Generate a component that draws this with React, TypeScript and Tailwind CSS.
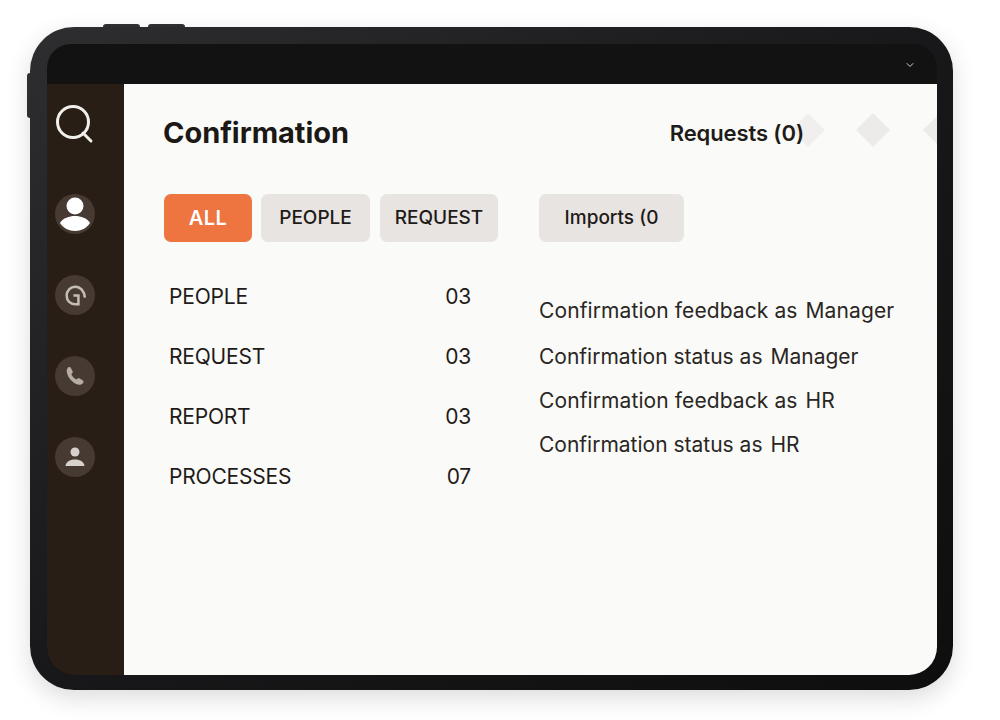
import { ChevronDown } from "lucide-react";

const rows = [
  { label: "PEOPLE", count: "03" },
  { label: "REQUEST", count: "03" },
  { label: "REPORT", count: "03" },
  { label: "PROCESSES", count: "07" },
];

const feedback = [
  { text: "Confirmation feedback as", role: "Manager", className: "h-[46px] tracking-[0.1px]" },
  { text: "Confirmation status as", role: "Manager", className: "h-[44px]" },
  { text: "Confirmation feedback as", role: "HR", className: "h-[44px] tracking-[0.1px]" },
  { text: "Confirmation status as", role: "HR", className: "h-[44px]" },
];

function NavCircle({ children, className = "" }: { children: React.ReactNode; className?: string }) {
  return (
    <div className={`flex h-[40px] w-[40px] items-center justify-center rounded-full bg-[#463a33] ${className}`}>
      {children}
    </div>
  );
}

function Sidebar() {
  return (
    <aside className="flex w-[77px] shrink-0 flex-col items-start bg-[#281e16] pl-[8px] pt-[20px]">
      <svg width="40" height="40" viewBox="0 0 40 40" fill="none" stroke="#f1efec" strokeWidth="3" strokeLinecap="round">
        <circle cx="18" cy="18" r="15.5" />
        <path d="M28 29l8 8" />
      </svg>
      <NavCircle className="mt-[50px]">
        <svg width="32" height="36" viewBox="0 0 32 36" fill="#ffffff">
          <circle cx="16" cy="10" r="8.5" />
          <path d="M1 27c3-5 9-7 15-7s12 2 15 7c-3 5-9 8-15 8s-12-3-15-8z" />
        </svg>
      </NavCircle>
      <NavCircle className="mt-[41px]">
        <svg width="25" height="25" viewBox="0 0 24 24" fill="none" stroke="#c4bdb7" strokeWidth="2.4">
          <path d="M21 14C20.500 7.500 16.500 3.500 12 3.500 7 3.500 3.500 7.500 3.500 12c0 5 3.500 8.500 8.500 8.500h2.800V12H10" />
        </svg>
      </NavCircle>
      <NavCircle className="mt-[41px]">
        <svg width="24" height="24" viewBox="0 0 24 24" fill="#b5aca5">
          <path d="M5 3.500c1-.8 2.300-.5 2.900.6l1.600 3c.4.800.3 1.600-.3 2.200l-.9 1c.9 2.100 2.800 4.100 5 5.200l1.200-.9c.6-.5 1.500-.5 2.200-.1l2.900 1.800c1 .6 1.200 1.800.5 2.700-1 1.300-2.500 2-4 1.800C10 19.800 4.500 13.500 3.800 8c-.2-1.800.2-3.400 1.200-4.500z" />
        </svg>
      </NavCircle>
      <NavCircle className="mt-[41px]">
        <svg width="22" height="22" viewBox="0 0 22 22" fill="#d8d2cc">
          <circle cx="11" cy="6" r="4.500" />
          <path d="M1.500 20c.5-4 4-6.500 9.500-6.500s9 2.500 9.500 6.500z" />
        </svg>
      </NavCircle>
    </aside>
  );
}

function Tab({ label, active = false, className = "" }: { label: string; active?: boolean; className?: string }) {
  return (
    <button
      className={`flex h-[48px] items-center justify-center rounded-[7px] font-['Inter',sans-serif] ${
        active ? "bg-[#ee7440] text-[20px] font-semibold tracking-[0.5px] text-white" : "bg-[#e7e4e2] text-[19px] font-medium text-[#1f1b18]"
      } ${className}`}
    >
      {label}
    </button>
  );
}

export default function App() {
  return (
    <div className="h-[720px] w-[1000px] overflow-hidden bg-white pl-[30px] pt-[27px]">
      <div className="relative h-[663px] w-[923px] rounded-[44px] bg-linear-to-br from-[#2e2e30] via-[#18181a] to-[#0e0e0e] pb-[15px] pl-[17px] pr-[16px] pt-[17px] shadow-[0_8px_24px_rgba(0,0,0,0.14)]">
        {/* hardware buttons */}
        <div className="absolute left-[73px] top-[-3px] h-[3px] w-[37px] rounded-t-sm bg-[#2f2f31]" />
        <div className="absolute left-[118px] top-[-3px] h-[3px] w-[37px] rounded-t-sm bg-[#2f2f31]" />
        <div className="absolute left-[-3px] top-[46px] h-[45px] w-[3px] rounded-l-sm bg-[#2f2f31]" />

        <div className="flex h-full flex-col overflow-hidden rounded-b-[28px] rounded-t-[24px] bg-[#121212]">
          <div className="flex h-[40px] shrink-0 items-center justify-end pr-[21px] pt-[1px]">
            <ChevronDown className="h-[12px] w-[12px] text-[#d0d0d0]" strokeWidth={2} />
          </div>
          <div className="flex min-h-0 flex-1">
            <Sidebar />
            <main className="relative flex-1 overflow-hidden bg-[#fafaf8] pl-[39px] pr-[20px]">
              {/* faint diamonds behind the header */}
              <div className="absolute left-[672px] top-[34px] h-[24px] w-[24px] rotate-45 bg-[#f0efed]" />
              <div className="absolute left-[737px] top-[34px] h-[24px] w-[24px] rotate-45 bg-[#ecebe9]" />
              <div className="absolute left-[804px] top-[34px] h-[24px] w-[24px] rotate-45 bg-[#ecebe9]" />

              <header className="relative flex h-[110px] items-start justify-between pt-[30px]">
                <h1 className="font-['Inter',sans-serif] text-[29px] font-bold leading-[38px] tracking-[-0.05px] text-[#1c1815]">
                  Confirmation
                </h1>
                <span className="mr-[113px] mt-[4px] font-['Inter',sans-serif] text-[22px] font-semibold leading-[30px] tracking-[-0.1px] text-[#1f1b18]">
                  Requests (0)
                </span>
              </header>

              <div className="flex">
                <div className="w-[376px] shrink-0">
                  <div className="ml-px flex gap-[9px]">
                    <Tab label="ALL" active className="w-[88px]" />
                    <Tab label="PEOPLE" className="w-[109px]" />
                    <Tab label="REQUEST" className="ml-px w-[118px]" />
                  </div>
                  <ul className="ml-[6px] mt-[25px] w-[302px] font-['Inter',sans-serif] text-[21px] tracking-[-0.2px] text-[#1f1b18]">
                    {rows.map((row) => (
                      <li key={row.label} className="flex h-[60px] items-center justify-between">
                        <span>{row.label}</span>
                        <span>{row.count}</span>
                      </li>
                    ))}
                  </ul>
                </div>
                <div>
                  <button className="flex h-[48px] w-[145px] items-center justify-center rounded-[7px] bg-[#e7e4e2] font-['Inter',sans-serif] text-[19px] font-medium text-[#1f1b18]">
                    Imports (0
                  </button>
                  <ul className="mt-[47px] font-['Inter',sans-serif] text-[21px] leading-[44px] text-[#2a2623]">
                    {feedback.map((item) => (
                      <li key={item.text + item.role} className={`flex gap-[8px] whitespace-nowrap ${item.className}`}>
                        <span>{item.text}</span>
                        <span>{item.role}</span>
                      </li>
                    ))}
                  </ul>
                </div>
              </div>
            </main>
          </div>
        </div>
      </div>
    </div>
  );
}
